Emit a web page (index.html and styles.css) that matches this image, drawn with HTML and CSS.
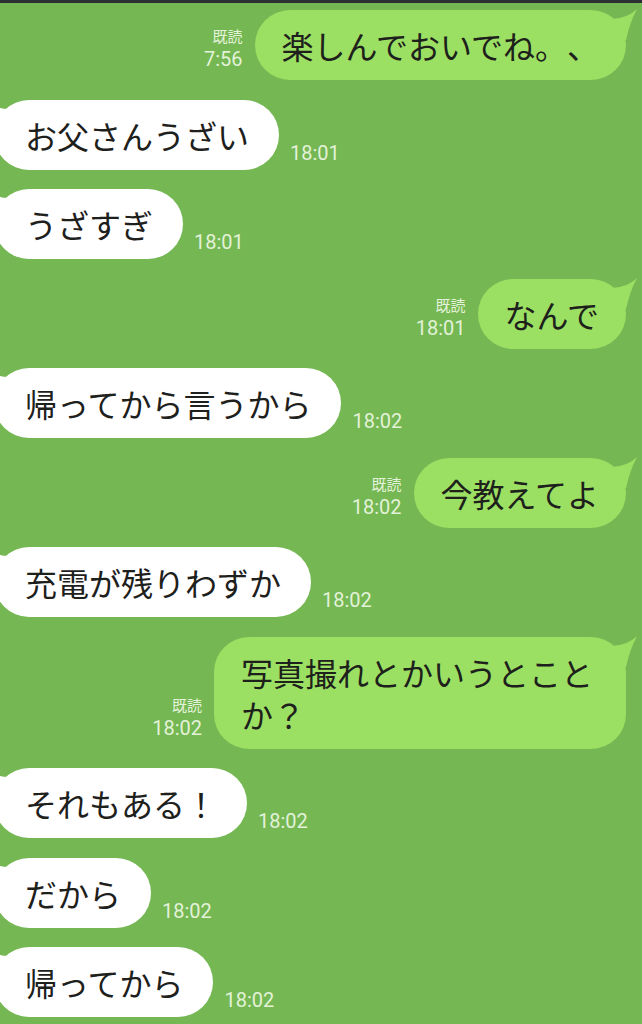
FILE: index.html
```html
<!DOCTYPE html>
<html lang="ja">
<head>
<meta charset="utf-8">
<title>LINE</title>
<link rel="stylesheet" href="styles.css">
</head>
<body>
<div class="topbar"></div>
<div class="chat">
  <div class="row out">
    <div class="meta"><span class="read">既読</span><span class="time">7:56</span></div>
    <div class="bubble">楽しんでおいでね。、<svg class="tail" viewBox="-20 -2 34 34"><path d="M-14 9Q2 8 11-1Q4 12 0 30L-14 30Z"/></svg></div>
  </div>
  <div class="row in">
    <div class="bubble">お父さんうざい<svg class="tail" viewBox="-20 -2 34 34"><path d="M-14 9Q2 8 11-1Q4 12 0 30L-14 30Z"/></svg></div>
    <span class="time">18:01</span>
  </div>
  <div class="row in">
    <div class="bubble">うざすぎ<svg class="tail" viewBox="-20 -2 34 34"><path d="M-14 9Q2 8 11-1Q4 12 0 30L-14 30Z"/></svg></div>
    <span class="time">18:01</span>
  </div>
  <div class="row out">
    <div class="meta"><span class="read">既読</span><span class="time">18:01</span></div>
    <div class="bubble">なんで<svg class="tail" viewBox="-20 -2 34 34"><path d="M-14 9Q2 8 11-1Q4 12 0 30L-14 30Z"/></svg></div>
  </div>
  <div class="row in">
    <div class="bubble">帰ってから言うから<svg class="tail" viewBox="-20 -2 34 34"><path d="M-14 9Q2 8 11-1Q4 12 0 30L-14 30Z"/></svg></div>
    <span class="time">18:02</span>
  </div>
  <div class="row out">
    <div class="meta"><span class="read">既読</span><span class="time">18:02</span></div>
    <div class="bubble">今教えてよ<svg class="tail" viewBox="-20 -2 34 34"><path d="M-14 9Q2 8 11-1Q4 12 0 30L-14 30Z"/></svg></div>
  </div>
  <div class="row in">
    <div class="bubble">充電が残りわずか<svg class="tail" viewBox="-20 -2 34 34"><path d="M-14 9Q2 8 11-1Q4 12 0 30L-14 30Z"/></svg></div>
    <span class="time">18:02</span>
  </div>
  <div class="row out">
    <div class="meta"><span class="read">既読</span><span class="time">18:02</span></div>
    <div class="bubble">写真撮れとかいうとことか？<svg class="tail" viewBox="-20 -2 34 34"><path d="M-14 9Q2 8 11-1Q4 12 0 30L-14 30Z"/></svg></div>
  </div>
  <div class="row in">
    <div class="bubble">それもある！<svg class="tail" viewBox="-20 -2 34 34"><path d="M-14 9Q2 8 11-1Q4 12 0 30L-14 30Z"/></svg></div>
    <span class="time">18:02</span>
  </div>
  <div class="row in">
    <div class="bubble">だから<svg class="tail" viewBox="-20 -2 34 34"><path d="M-14 9Q2 8 11-1Q4 12 0 30L-14 30Z"/></svg></div>
    <span class="time">18:02</span>
  </div>
  <div class="row in">
    <div class="bubble">帰ってから<svg class="tail" viewBox="-20 -2 34 34"><path d="M-14 9Q2 8 11-1Q4 12 0 30L-14 30Z"/></svg></div>
    <span class="time">18:02</span>
  </div>
</div>
</body>
</html>
```

FILE: styles.css
```css
html, body {
  margin: 0;
  padding: 0;
}

body {
  width: 642px;
  height: 1024px;
  overflow: hidden;
  background: #74b753;
  font-family: "Noto Sans CJK JP", "Noto Sans", sans-serif;
}

.topbar {
  height: 3px;
  background: #2b3035;
}

.chat {
  display: flex;
  flex-direction: column;
  gap: 19.5px;
  padding-top: 7px;
}

.row {
  display: flex;
  align-items: flex-end;
}

.row.out {
  justify-content: flex-end;
  padding-right: 16px;
}

.bubble {
  position: relative;
  font-size: 32px;
  line-height: 42px;
  padding: 14px 27px;
  border-radius: 35px;
  color: #1d201b;
  flex-shrink: 1;
  text-spacing-trim: space-all;
}

.out .bubble {
  background: #9bdf63;
  max-width: 358px;
}

.in .bubble {
  background: #ffffff;
  margin-left: -6px;
  padding-left: 31px;
  padding-right: 30px;
}

.tail {
  position: absolute;
  top: -2px;
  width: 34px;
  height: 34px;
}

.out .tail {
  right: -14px;
  fill: #9bdf63;
}

.in .tail {
  left: -14px;
  fill: #ffffff;
  transform: scaleX(-1);
}

.time {
  font-family: Roboto, "Noto Sans", sans-serif;
  font-size: 20px;
  line-height: 24px;
  color: #e3f2d8;
}

.in .time {
  margin-left: 11px;
  margin-bottom: 5px;
}

.meta {
  display: flex;
  flex-direction: column;
  align-items: flex-end;
  margin-right: 12px;
  margin-bottom: 9px;
}

.read {
  font-size: 15px;
  line-height: 22px;
  color: #e3f2d8;
}
```
